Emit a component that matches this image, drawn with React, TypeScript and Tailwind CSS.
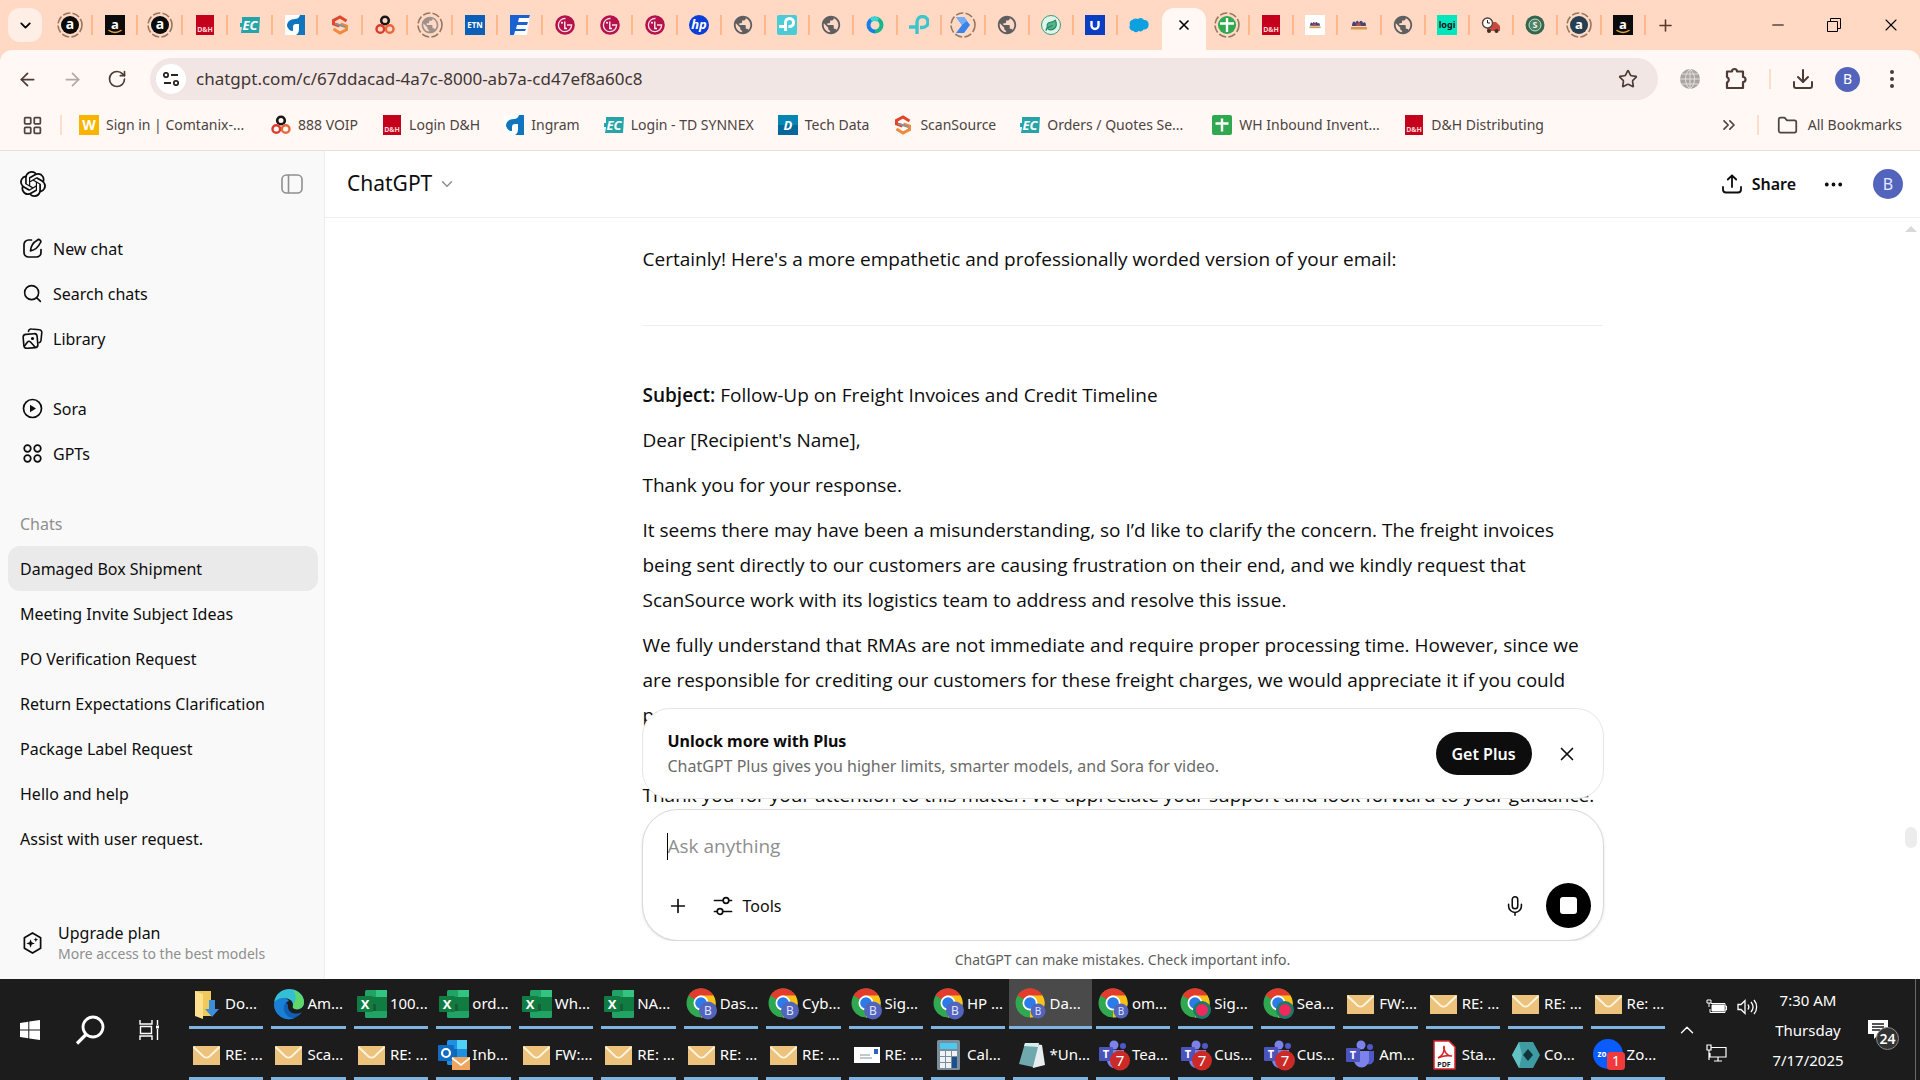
import {
  ArrowLeft,
  ArrowRight,
  ChevronDown,
  ChevronsRight,
  ChevronUp,
  Download,
  Ellipsis,
  EllipsisVertical,
  Folder,
  LayoutGrid,
  Leaf,
  Mic,
  Minus,
  Plus,
  RotateCw,
  Search,
  Star,
  X,
} from "lucide-react";
import type { ReactNode } from "react";
import { MdPublic } from "react-icons/md";
import { SiOpenai } from "react-icons/si";

type IconKind =
  | "amazon"
  | "amazonRing"
  | "amazonSlate"
  | "dh"
  | "ec"
  | "ingram"
  | "scan"
  | "voip"
  | "globe"
  | "globeRing"
  | "etn"
  | "eblue"
  | "lg"
  | "hp"
  | "tplink"
  | "tplinkPlain"
  | "webex"
  | "chevronRing"
  | "leaf"
  | "unifi"
  | "cloud"
  | "sheetsRing"
  | "sheets"
  | "people"
  | "peopleWhite"
  | "logi"
  | "truck"
  | "coin"
  | "comtanix"
  | "techdata"
  | "close";

function SvgIcon({ children }: { children: ReactNode }) {
  return (
    <svg viewBox="0 0 20 20" className="size-5 shrink-0" aria-hidden="true">
      {children}
    </svg>
  );
}

function Ring({ children }: { children: ReactNode }) {
  return (
    <svg
      viewBox="0 0 26 26"
      className="size-[26px] shrink-0"
      aria-hidden="true"
    >
      <circle
        cx="13"
        cy="13"
        r="12"
        fill="none"
        stroke="#95785f"
        strokeWidth="1.6"
        strokeDasharray="7.5 2.3"
      />
      <g transform="translate(3 3)">{children}</g>
    </svg>
  );
}

interface GlyphProps {
  x?: number;
  y: number;
  size: number;
  fill?: string;
  italic?: boolean;
  children: string;
}

function Glyph({
  x = 10,
  y,
  size,
  fill = "#fff",
  italic = false,
  children,
}: GlyphProps) {
  return (
    <text
      x={x}
      y={y}
      fontSize={size}
      fill={fill}
      fontWeight="700"
      fontStyle={italic ? "italic" : "normal"}
      textAnchor="middle"
    >
      {children}
    </text>
  );
}

const tplinkPath = "M2 11.5h6.5V16M8.5 11.5v-4a4 4 0 1 1 4 4h-1";

const peopleArt = (
  <>
    <path
      d="M3 11c0-4 2-6 3.5-3 1-3 2.5-3 3.500 0 1-3 3-3 4 0 2-2 3 0 3 3Z"
      fill="#47427a"
    />
    <path d="M7 11c0-3 1-4 2-2 1-3 3-1 3 2Z" fill="#a8504d" />
    <path d="M2 12h16v2.5H2Z" fill="#d69a4d" />
  </>
);

function SiteIcon({ kind }: { kind: IconKind }) {
  switch (kind) {
    case "amazon":
      return (
        <SvgIcon>
          <rect width="20" height="20" fill="#0b0b0b" />
          <Glyph y={14} size={13}>
            a
          </Glyph>
          <path
            d="M4 15.5c3.500 2.500 8.500 2.500 12 0"
            stroke="#f0a33c"
            strokeWidth="1.5"
            fill="none"
            strokeLinecap="round"
          />
        </SvgIcon>
      );
    case "amazonRing":
      return (
        <Ring>
          <circle cx="10" cy="10" r="9" fill="#0b0b0b" />
          <Glyph y={14} size={14}>
            a
          </Glyph>
        </Ring>
      );
    case "amazonSlate":
      return (
        <Ring>
          <circle cx="10" cy="10" r="9" fill="#263e50" />
          <Glyph y={14} size={13}>
            a
          </Glyph>
        </Ring>
      );
    case "dh":
      return (
        <SvgIcon>
          <rect x="1" width="18" height="20" fill="#c4001d" />
          <Glyph y={17} size={7} fill="#ffd5d5">
            D&amp;H
          </Glyph>
        </SvgIcon>
      );
    case "ec":
      return (
        <SvgIcon>
          <path d="M2 2h18l-1 16H1l1-6H0V8h2Z" fill="#25a5a9" />
          <Glyph y={15} size={13} italic>
            EC
          </Glyph>
        </SvgIcon>
      );
    case "ingram":
      return (
        <SvgIcon>
          <rect width="20" height="20" fill="#fff" />
          <path
            d="M20 0v20h-9c2-1 3-3 3-6V9h-3c-2 0-3 1-3 3v4c-3 0-5-2-6-5 0-4 3-7 8-7 2 0 4-1 5-4Z"
            fill="#0f75bc"
          />
        </SvgIcon>
      );
    case "scan":
      return (
        <SvgIcon>
          <path
            d="M16.5 6 10 2 3.500 5.500V9l6 2"
            stroke="#e2452c"
            strokeWidth="3"
            fill="none"
          />
          <path
            d="m3.500 14 6.500 4 6.500-3.500V11l-6-2"
            stroke="#f08a3c"
            strokeWidth="3"
            fill="none"
          />
          <path d="M5 8.500 15.500 12" stroke="#8d8f94" strokeWidth="2.2" />
        </SvgIcon>
      );
    case "voip":
      return (
        <SvgIcon>
          <circle cx="10" cy="5.500" r="3.8" stroke="#191515" strokeWidth="2.6" fill="none" />
          <circle cx="5.300" cy="14" r="3.8" stroke="#dd3a2c" strokeWidth="2.4" fill="none" />
          <circle cx="14.700" cy="14" r="3.8" stroke="#e8663a" strokeWidth="2.4" fill="none" />
        </SvgIcon>
      );
    case "globe":
      return <MdPublic size={22} color="#5f5f61" aria-hidden="true" />;
    case "globeRing":
      return (
        <Ring>
          <MdPublic size={20} color="#9d9189" />
        </Ring>
      );
    case "etn":
      return (
        <SvgIcon>
          <rect width="20" height="20" fill="#0b5fb8" />
          <Glyph y={13} size={8}>
            ETN
          </Glyph>
        </SvgIcon>
      );
    case "eblue":
      return (
        <SvgIcon>
          <path d="M0 0h20l-3 20H0Z" fill="#fff" />
          <path d="M0 0h20l-1 3H9L8 7h10l-1 3H7l-1 4h10l-1 2H5l-1 4H0Z" fill="#1a62d2" />
        </SvgIcon>
      );
    case "lg":
      return (
        <SvgIcon>
          <circle cx="10" cy="10" r="9.8" fill="#b5124c" />
          <path
            d="M10.500 3.500A6.600 6.600 0 1 0 16.600 10H12"
            stroke="#f7dde6"
            strokeWidth="1.3"
            fill="none"
          />
          <path d="M9.800 6.500v7H12" stroke="#fff" strokeWidth="1.3" fill="none" />
          <circle cx="7" cy="7.800" r="1" fill="#fff" />
        </SvgIcon>
      );
    case "hp":
      return (
        <SvgIcon>
          <circle cx="10" cy="10" r="10" fill="#0a3ed6" />
          <Glyph y={14} size={13} italic>
            hp
          </Glyph>
        </SvgIcon>
      );
    case "tplink":
      return (
        <SvgIcon>
          <rect width="20" height="20" rx="2" fill="#4acbd6" />
          <path d={tplinkPath} stroke="#fff" strokeWidth="3" fill="none" />
        </SvgIcon>
      );
    case "tplinkPlain":
      return (
        <SvgIcon>
          <path
            d="M0 12h8v7M8 12V7a5.500 5.500 0 1 1 5.500 5.500H11"
            stroke="#3cc5cd"
            strokeWidth="3.4"
            fill="none"
          />
        </SvgIcon>
      );
    case "webex":
      return (
        <SvgIcon>
          <path d="M10 3.500a6.500 6.500 0 0 1 0 13" stroke="#18b68c" strokeWidth="4" fill="none" />
          <path d="M10 16.500a6.500 6.500 0 0 1 0-13" stroke="#187fe8" strokeWidth="4" fill="none" />
          <path d="M6 5a6.500 6.500 0 0 1 7 0" stroke="#34d8d0" strokeWidth="4" fill="none" />
        </SvgIcon>
      );
    case "chevronRing":
      return (
        <Ring>
          <path d="M3 2h8l6 8-6 8H3l6-8Z" fill="#3a83ea" />
          <path d="M3 2h8l3 4-5 4Z" fill="#75aef8" />
        </Ring>
      );
    case "leaf":
      return (
        <span className="flex size-5 items-center justify-center rounded-full border border-[#3c9b76] bg-[#dff5ea]">
          <Leaf size={13} color="#1d8a60" fill="#59b08b" aria-hidden="true" />
        </span>
      );
    case "unifi":
      return (
        <SvgIcon>
          <rect width="20" height="20" fill="#0a3fc4" />
          <path
            d="M6.500 6v4.500a3.500 3.500 0 0 0 7 0V6"
            stroke="#fff"
            strokeWidth="2.4"
            fill="none"
          />
        </SvgIcon>
      );
    case "cloud":
      return (
        <SvgIcon>
          <path
            d="M4.500 16A4 4 0 0 1 1 10 4 4 0 0 1 4 4.500a4.500 4.500 0 0 1 5-.5 4.500 4.500 0 0 1 6 1 4.200 4.200 0 0 1 4.500 5 4.200 4.200 0 0 1-5 4.500 4 4 0 0 1-5 1.500 3 3 0 0 1-5 0Z"
            fill="#0ba0e0"
          />
        </SvgIcon>
      );
    case "sheetsRing":
      return (
        <Ring>
          <circle cx="10" cy="10" r="9" fill="#2fa84f" />
          <path d="M10 3v14M3 8.500h14" stroke="#fff" strokeWidth="2.4" />
        </Ring>
      );
    case "sheets":
      return (
        <SvgIcon>
          <rect width="20" height="20" rx="2" fill="#2fa84f" />
          <path d="M10 3.500v13M3.500 8.500h13" stroke="#fff" strokeWidth="2.4" />
        </SvgIcon>
      );
    case "people":
      return <SvgIcon>{peopleArt}</SvgIcon>;
    case "peopleWhite":
      return (
        <SvgIcon>
          <rect width="20" height="20" fill="#fff" />
          <g transform="translate(3 3) scale(.7)">{peopleArt}</g>
        </SvgIcon>
      );
    case "logi":
      return (
        <SvgIcon>
          <rect width="20" height="20" fill="#00e6bd" />
          <Glyph y={13} size={9} fill="#111">
            logi
          </Glyph>
        </SvgIcon>
      );
    case "truck":
      return (
        <SvgIcon>
          <path d="M9 7h6l4 4v5H6V9Z" fill="#c84a3c" />
          <circle cx="6.500" cy="8" r="5" fill="#fff" stroke="#55423c" strokeWidth="1.4" />
          <path d="M6.500 5v3H9" stroke="#222" fill="none" />
          <circle cx="8" cy="16" r="2" fill="#3b3230" />
          <circle cx="15.500" cy="16" r="2" fill="#3b3230" />
        </SvgIcon>
      );
    case "coin":
      return (
        <SvgIcon>
          <circle cx="10" cy="10" r="9.5" fill="#33664c" />
          <circle cx="10" cy="10" r="6" fill="#4f8265" stroke="#c9dccf" />
          <Glyph y={13} size={9} fill="#eef5f0">
            S
          </Glyph>
        </SvgIcon>
      );
    case "comtanix":
      return (
        <SvgIcon>
          <rect width="20" height="20" fill="#f8b500" />
          <Glyph y={15} size={14}>
            W
          </Glyph>
        </SvgIcon>
      );
    case "techdata":
      return (
        <SvgIcon>
          <rect width="20" height="20" fill="#0786b4" />
          <path d="M0 10h20v10H0Z" fill="#06679a" />
          <Glyph y={15} size={13} italic>
            D
          </Glyph>
        </SvgIcon>
      );
    default:
      return <X size={16} strokeWidth={2.5} aria-hidden="true" />;
  }
}

const wideTabs: IconKind[] = [
  "amazonRing",
  "amazon",
  "amazonRing",
  "dh",
  "ec",
  "ingram",
  "scan",
  "voip",
  "globeRing",
  "etn",
  "eblue",
  "lg",
  "lg",
  "lg",
];

const narrowTabs: IconKind[] = [
  "hp",
  "globe",
  "tplink",
  "globe",
  "webex",
  "tplinkPlain",
  "chevronRing",
  "globe",
  "leaf",
  "unifi",
  "cloud",
  "close",
  "sheetsRing",
  "dh",
  "peopleWhite",
  "people",
  "globe",
  "logi",
  "truck",
  "coin",
  "amazonSlate",
  "amazon",
];

function TabStrip() {
  return (
    <div className="flex h-[50px] items-center bg-[#ffd9c4]">
      <button
        type="button"
        aria-label="Search tabs"
        className="ml-2 flex size-[34px] items-center justify-center rounded-xl bg-[#ffeee5]"
      >
        <ChevronDown size={17} strokeWidth={2.5} />
      </button>
      <div className="flex flex-1 items-center self-stretch pl-1.5">
        {wideTabs.map((kind, i) => (
          <button
            key={i}
            type="button"
            aria-label={`Tab ${i + 1}`}
            className="flex w-[45px] items-center"
          >
            <span className="flex flex-1 justify-center">
              <SiteIcon kind={kind} />
            </span>
            <span className="h-5 w-0.5 bg-[#ffb78c]" />
          </button>
        ))}
        {narrowTabs.map((kind, i) => {
          if (kind === "close") {
            return (
              <div
                key={i}
                className="mt-2 flex w-11 items-center justify-center self-stretch rounded-t-xl bg-[#fff8f5] pb-2"
              >
                <button type="button" aria-label="Close tab">
                  <SiteIcon kind={kind} />
                </button>
              </div>
            );
          }
          const divided = narrowTabs[i + 1] !== "close";
          return (
            <button
              key={i}
              type="button"
              aria-label={`Tab ${i + 15}`}
              className="flex w-11 items-center"
            >
              <span className="flex flex-1 justify-center">
                <SiteIcon kind={kind} />
              </span>
              <span className={`h-5 w-0.5 ${divided ? "bg-[#ffb78c]" : ""}`} />
            </button>
          );
        })}
        <button
          type="button"
          aria-label="New tab"
          className="ml-2.5 text-[#5a3a2a]"
        >
          <Plus size={19} />
        </button>
      </div>
      <div className="flex items-center text-black">
        <button type="button" aria-label="Minimize" className="flex w-14 justify-center">
          <Minus size={18} strokeWidth={1.5} />
        </button>
        <button type="button" aria-label="Restore" className="flex w-14 justify-center">
          <svg viewBox="0 0 14 14" className="size-3.5" fill="none" stroke="currentColor">
            <path d="M.5 3.500h10v10H.5ZM3.500 3V.5h10v10H11" />
          </svg>
        </button>
        <button type="button" aria-label="Close" className="flex w-[58px] justify-center">
          <X size={20} strokeWidth={1.3} />
        </button>
      </div>
    </div>
  );
}

function AddressBar() {
  return (
    <div className="flex h-[58px] items-center rounded-t-xl bg-[#fff8f5] pr-4 pl-[17px] text-[#4d3b35]">
      <button type="button" aria-label="Back" className="w-[45px]">
        <ArrowLeft size={21} />
      </button>
      <button type="button" aria-label="Forward" className="w-[45px] text-[#b3a8a4]">
        <ArrowRight size={21} />
      </button>
      <button type="button" aria-label="Reload" className="w-[43px]">
        <RotateCw size={20} />
      </button>
      <div className="flex h-[42px] flex-1 items-center rounded-full bg-[#f2e6e4] pr-5 pl-1.5">
        <button
          type="button"
          aria-label="Site information"
          className="flex size-[30px] items-center justify-center rounded-full bg-white text-[#2c2523]"
        >
          <svg viewBox="0 0 16 14" className="h-3.5 w-4" fill="none" stroke="currentColor" strokeWidth="1.8">
            <circle cx="3" cy="3" r="2.2" />
            <path d="M8 3h7M1 11h7" />
            <circle cx="13" cy="11" r="2.2" />
          </svg>
        </button>
        <input
          aria-label="Address"
          className="ml-2.5 flex-1 bg-transparent text-[17px] text-[#3f3532] outline-none"
          defaultValue="chatgpt.com/c/67ddacad-4a7c-8000-ab7a-cd47ef8a60c8"
        />
        <button type="button" aria-label="Bookmark this page">
          <Star size={20} />
        </button>
      </div>
      <div className="flex items-center pl-[22px]">
        <svg viewBox="0 0 20 20" className="size-5" fill="none" aria-hidden="true">
          <circle cx="10" cy="10" r="10" fill="#a9a5a3" />
          <path
            d="M10 0v20M0 10h20M2 5h16M2 15h16M10 0C4 5 4 15 10 20M10 0c6 5 6 15 0 20"
            stroke="#e6dfdc"
          />
        </svg>
        <button type="button" aria-label="Extensions" className="ml-[25px]">
          <svg
            viewBox="0 0 22 24"
            className="h-6 w-[22px]"
            fill="none"
            stroke="currentColor"
            strokeWidth="2.2"
            strokeLinejoin="round"
          >
            <path d="M2 4.500h5a2.500 2.500 0 0 1 5 0h6v5.500a2.500 2.500 0 0 1 0 5V21H2v-5.500a3 3 0 0 0 0-5.500Z" />
          </svg>
        </button>
        <span className="ml-[22px] h-5 w-0.5 bg-[#ffdccb]" />
        <button type="button" aria-label="Downloads" className="ml-5">
          <Download size={24} />
        </button>
        <button
          type="button"
          aria-label="Profile"
          className="ml-5 flex size-[25px] items-center justify-center rounded-full bg-[#5364bd] text-sm text-white"
        >
          B
        </button>
        <button type="button" aria-label="Chrome menu" className="ml-5">
          <EllipsisVertical size={24} />
        </button>
      </div>
    </div>
  );
}

const bookmarks: { label: string; kind: IconKind; cut?: boolean }[] = [
  { label: "Sign in | Comtanix-...", kind: "comtanix", cut: true },
  { label: "888 VOIP", kind: "voip" },
  { label: "Login D&H", kind: "dh" },
  { label: "Ingram", kind: "ingram" },
  { label: "Login - TD SYNNEX", kind: "ec" },
  { label: "Tech Data", kind: "techdata" },
  { label: "ScanSource", kind: "scan" },
  { label: "Orders / Quotes Se...", kind: "ec", cut: true },
  { label: "WH Inbound Invent...", kind: "sheets", cut: true },
  { label: "D&H Distributing", kind: "dh" },
];

function BookmarksBar() {
  return (
    <div className="flex h-[43px] items-center border-b border-[#eadfdb] bg-[#fff8f5] pr-[18px] pb-2 pl-[22px] text-sm text-[#4d4340]">
      <LayoutGrid size={21} aria-hidden="true" />
      <span className="mx-[17px] h-5 w-0.5 bg-[#ffdccb]" />
      <nav className="flex flex-1 items-center gap-6 whitespace-nowrap">
        {bookmarks.map(({ label, kind, cut }) => (
          <a key={label} href="#" className="flex items-center gap-[7px]">
            <SiteIcon kind={kind} />
            <span className={cut ? "w-[141px]" : ""}>{label}</span>
          </a>
        ))}
      </nav>
      <button type="button" aria-label="More bookmarks">
        <ChevronsRight size={20} />
      </button>
      <span className="mx-[18px] h-5 w-0.5 bg-[#ffdccb]" />
      <a href="#" className="flex items-center gap-2.5">
        <Folder size={21} aria-hidden="true" />
        All Bookmarks
      </a>
    </div>
  );
}

function NavItem({ icon, label }: { icon: ReactNode; label: string }) {
  return (
    <a href="#" className="flex h-[45px] items-center gap-2.5 px-[22px]">
      {icon}
      {label}
    </a>
  );
}

const chats = [
  "Damaged Box Shipment",
  "Meeting Invite Subject Ideas",
  "PO Verification Request",
  "Return Expectations Clarification",
  "Package Label Request",
  "Hello and help",
  "Assist with user request.",
];

function Sidebar() {
  return (
    <aside className="flex w-[325px] shrink-0 flex-col border-r border-[#ededed] bg-[#f9f9f9] text-base text-[#0d0d0d]">
      <div className="flex h-[66px] items-center justify-between px-5">
        <SiOpenai size={26} aria-label="ChatGPT" />
        <button type="button" aria-label="Close sidebar" className="text-[#8f8f8f]">
          <svg viewBox="0 0 24 22" className="h-[22px] w-6" fill="none" stroke="currentColor" strokeWidth="1.6">
            <rect x="2" y="2" width="20" height="18" rx="4.5" />
            <path d="M8.500 2v18" />
          </svg>
        </button>
      </div>
      <nav className="pt-[9px]">
        <NavItem
          label="New chat"
          icon={
            <svg
              viewBox="0 0 21 21"
              className="size-[21px]"
              fill="none"
              stroke="currentColor"
              strokeWidth="1.7"
              strokeLinecap="round"
              strokeLinejoin="round"
            >
              <path d="M9.500 2h-3A4.500 4.500 0 0 0 2 6.500v8A4.500 4.500 0 0 0 6.500 19h8a4.500 4.500 0 0 0 4.500-4.500v-3" />
              <path d="M15.200 2.300a1.900 1.900 0 0 1 3 2.700c-1.500 3.300-4 6.700-9.700 7.800.4-5.500 3.500-8.700 6.700-10.500Z" />
            </svg>
          }
        />
        <NavItem
          label="Search chats"
          icon={<Search size={21} strokeWidth={1.8} />}
        />
        <NavItem
          label="Library"
          icon={
            <svg
              viewBox="0 0 21 21"
              className="size-[21px]"
              fill="none"
              stroke="currentColor"
              strokeWidth="1.6"
              strokeLinecap="round"
              strokeLinejoin="round"
            >
              <path d="M6.500 3.500A2.500 2.500 0 0 1 9.500 1l8 .8a2.500 2.500 0 0 1 2.300 2.700l-.8 8a2.500 2.500 0 0 1-2 2.200" />
              <rect x="1.500" y="6" width="14" height="14" rx="3" transform="rotate(-5 8.500 13)" />
              <path d="m2.500 18 3-4c1-1 2-1 3 0l4.500 5" />
              <circle cx="10.500" cy="10.500" r=".8" fill="currentColor" />
            </svg>
          }
        />
      </nav>
      <nav className="pt-[25px]">
        <NavItem
          label="Sora"
          icon={
            <svg viewBox="0 0 21 21" className="size-[21px]" fill="none" stroke="currentColor" strokeWidth="1.7">
              <circle cx="10.500" cy="10.500" r="9" />
              <path d="M8 6.800v7.400l6-3.700Z" fill="currentColor" stroke="none" />
            </svg>
          }
        />
        <NavItem
          label="GPTs"
          icon={
            <svg viewBox="0 0 21 21" className="size-[21px]" fill="none" stroke="currentColor" strokeWidth="1.7">
              <circle cx="5.500" cy="5.500" r="3.3" />
              <circle cx="15.500" cy="5.500" r="3.3" />
              <circle cx="5.500" cy="15.500" r="3.3" />
              <circle cx="15.500" cy="15.500" r="3.3" />
            </svg>
          }
        />
      </nav>
      <h2 className="mt-[25px] flex h-[45px] items-center px-5 text-[#8f8f8f]">
        Chats
      </h2>
      <ul className="pr-1.5 pl-2">
        {chats.map((chat, i) => (
          <li key={chat}>
            <a
              href="#"
              className={`flex h-[45px] items-center rounded-xl px-3 ${i === 0 ? "bg-[#eaeaea]" : ""}`}
            >
              {chat}
            </a>
          </li>
        ))}
      </ul>
      <a href="#" className="mt-auto flex items-center gap-[15px] px-[22px] pb-[15px]">
        <svg
          viewBox="0 0 22 26"
          className="h-[26px] w-[21px]"
          fill="none"
          stroke="currentColor"
          strokeWidth="1.8"
          strokeLinejoin="round"
        >
          <path d="M11 2.500 19.500 7.500v11L11 23.500l-8.500-5v-11Z" />
          <path
            d="m9 9 1.200 3.300 3.300 1.200-3.300 1.200L9 18l-1.200-3.300-3.300-1.200 3.300-1.200ZM14.500 7l.7 1.800 1.800.7-1.800.7-.7 1.800-.7-1.800-1.800-.7 1.800-.7Z"
            fill="currentColor"
            stroke="none"
          />
        </svg>
        <span>
          <span className="block leading-[22px]">Upgrade plan</span>
          <span className="block text-sm leading-5 text-[#8f8f8f]">
            More access to the best models
          </span>
        </span>
      </a>
    </aside>
  );
}

function Conversation() {
  return (
    <article className="mx-auto w-full max-w-[960px] pt-6 font-['Open_Sans',sans-serif] text-[19px] leading-[35px] text-[#0d0d0d]">
      <p>
        Certainly! Here's a more empathetic and professionally worded version of
        your email:
      </p>
      <hr className="mt-12 mb-[52px] border-[#ededed]" />
      <div className="flex flex-col gap-2.5">
        <p>
          <strong className="font-semibold">Subject:</strong> Follow-Up on
          Freight Invoices and Credit Timeline
        </p>
        <p>Dear [Recipient's Name],</p>
        <p>Thank you for your response.</p>
        <p>
          It seems there may have been a misunderstanding, so I’d like to
          clarify the concern. The freight invoices
          <br />
          being sent directly to our customers are causing frustration on their
          end, and we kindly request that
          <br />
          ScanSource work with its logistics team to address and resolve this
          issue.
        </p>
        <p>
          We fully understand that RMAs are not immediate and require proper
          processing time. However, since we
          <br />
          are responsible for crediting our customers for these freight charges,
          we would appreciate it if you could
          <br />
          provide a timeline for when the necessary billing credits will be
          issued, as this will allow us to plan our
          <br />
          next steps.
        </p>
        <p>
          Thank you for your attention to this matter. We appreciate your
          support and look forward to your guidance.
        </p>
      </div>
    </article>
  );
}

function Composer() {
  return (
    <div className="absolute inset-x-0 bottom-0 mx-auto flex max-w-[962px] flex-col text-[#0d0d0d]">
      <section className="mb-2.5 flex h-[91px] items-center rounded-[28px] border border-[#e6e6e6] bg-white px-[25px]">
        <div className="flex-1">
          <h2 className="text-base leading-[25px] font-bold">
            Unlock more with Plus
          </h2>
          <p className="text-base leading-[25px] text-[#6b6b6b]">
            ChatGPT Plus gives you higher limits, smarter models, and Sora for
            video.
          </p>
        </div>
        <button
          type="button"
          className="h-[43px] w-24 rounded-full bg-[#0d0d0d] text-base font-semibold text-white"
        >
          Get Plus
        </button>
        <button type="button" aria-label="Dismiss" className="ml-6">
          <X size={22} strokeWidth={1.8} />
        </button>
      </section>
      <form className="flex h-[132px] flex-col justify-between rounded-[36px] border border-[#d9d9d9] bg-white pt-5 pr-3 pb-3 pl-6 shadow-sm">
        <div className="flex items-center">
          <span className="h-[27px] w-px bg-black" />
          <input
            aria-label="Message"
            placeholder="Ask anything"
            className="flex-1 bg-transparent font-['Open_Sans',sans-serif] text-[19px] leading-8 outline-none placeholder:text-[#8f8f8f]"
          />
        </div>
        <div className="flex h-[45px] items-center">
          <button type="button" aria-label="Add files">
            <Plus size={22} strokeWidth={1.8} />
          </button>
          <button type="button" className="ml-6 flex items-center gap-2.5 text-base">
            <svg
              viewBox="0 0 20 20"
              className="size-5"
              fill="none"
              stroke="currentColor"
              strokeWidth="1.7"
              strokeLinecap="round"
            >
              <circle cx="13" cy="4.500" r="2.8" />
              <path d="M1.500 4.500H10M16 4.500h2.500M10 15.500h8.500M1.500 15.500H4" />
              <circle cx="7" cy="15.500" r="2.8" />
            </svg>
            Tools
          </button>
          <button type="button" aria-label="Dictate" className="mr-5 ml-auto">
            <Mic size={22} strokeWidth={1.7} />
          </button>
          <button
            type="button"
            aria-label="Stop"
            className="flex size-[45px] items-center justify-center rounded-full bg-black"
          >
            <span className="size-[17px] rounded-[3px] bg-white" />
          </button>
        </div>
      </form>
      <p className="h-[38px] bg-white text-center text-sm leading-[38px] text-[#5d5d5d]">
        ChatGPT can make mistakes. Check important info.
      </p>
    </div>
  );
}

function ChatPane() {
  return (
    <main className="flex min-w-0 flex-1 flex-col bg-white">
      <header className="flex h-[67px] items-center border-b border-[#ededed] pr-[17px] pl-[22px] text-[#0d0d0d]">
        <button type="button" className="flex items-center gap-1.5 text-[21px]">
          ChatGPT
          <ChevronDown size={18} className="text-[#8f8f8f]" />
        </button>
        <button
          type="button"
          className="ml-auto flex items-center gap-2.5 text-base font-semibold"
        >
          <svg
            viewBox="0 0 20 20"
            className="size-5"
            fill="none"
            stroke="currentColor"
            strokeWidth="1.8"
            strokeLinecap="round"
            strokeLinejoin="round"
          >
            <path d="M10 13V1.500M5.800 5.500 10 1.300l4.200 4.200M1 13v2.500a3 3 0 0 0 3 3h12a3 3 0 0 0 3-3V13" />
          </svg>
          Share
        </button>
        <button type="button" aria-label="Conversation options" className="ml-[26px]">
          <Ellipsis size={23} />
        </button>
        <button
          type="button"
          aria-label="Account"
          className="ml-7 flex size-[30px] items-center justify-center rounded-full bg-[#5364bd] text-base text-[#e6e9ff]"
        >
          B
        </button>
      </header>
      <div className="relative flex-1 overflow-hidden">
        <Conversation />
        <div className="absolute inset-y-0 right-0 flex w-[18px] flex-col items-center pt-2">
          <svg viewBox="0 0 12 6" className="h-1.5 w-3 text-[#d9d9d9]" fill="currentColor" aria-hidden="true">
            <path d="M6 0l6 6H0Z" />
          </svg>
          <span className="mt-auto mb-[131px] h-[21px] w-3 rounded-full bg-[#ececec]" />
        </div>
        <Composer />
      </div>
    </main>
  );
}

type AppKind =
  | "folder"
  | "edge"
  | "excel"
  | "chrome"
  | "chromeSmall"
  | "chromeRed"
  | "mail"
  | "outlook"
  | "card"
  | "calc"
  | "notepad"
  | "teamsBadge"
  | "teams"
  | "pdf"
  | "cube"
  | "zoom";

const chromeArt = (
  <>
    <circle cx="15" cy="15" r="14.5" fill="#2fa84f" />
    <path d="M15 15 2.500 7.500A14.500 14.500 0 0 1 27.500 7.500Z" fill="#e33b2e" />
    <path d="M15 15 13 7.500h14.500A14.500 14.500 0 0 1 15 29.500Z" fill="#fbc116" />
    <circle cx="15" cy="15" r="7.5" fill="#fff" />
    <circle cx="15" cy="15" r="5.8" fill="#2d7be8" />
  </>
);

const appArt: Record<AppKind, ReactNode> = {
  folder: (
    <>
      <path d="M4 3h16v25H4Z" fill="#f0c95c" />
      <path d="M4 3l8 3v25l-8-3Z" fill="#ffe08d" />
      <path d="M18 12h6v9h4l-7 8-7-8h4Z" fill="#3c8edb" />
    </>
  ),
  edge: (
    <>
      <path d="M1 16a15 15 0 0 0 24 12c2-1 3-3 4-4-8 4-15 0-14-7-3-6-11-7-14-1Z" fill="#0f5fb5" />
      <path d="M1 16c2-7 11-9 15-3-4 1-6 5-5 9 1 4 5 9 11 8A15 15 0 0 1 1 16Z" fill="#1b7fd6" />
      <path d="M1 15C2 6 9 1 16 1c9 0 15 6 15 13 0 6-5 8-9 7-3-1-2-2-2-4 0-5-5-7-9-7-5 0-8 2-10 5Z" fill="#35bfd4" />
      <path d="M20 2c7 2 11 7 11 12 0 6-5 8-9 7-3-1-2-2-2-4 3-4 4-10 0-15Z" fill="#5fd76a" />
    </>
  ),
  excel: (
    <>
      <rect x="9" y="2" width="22" height="28" rx="1.5" fill="#21a366" />
      <path d="M9 9h22v7H9Z" fill="#107c41" />
      <path d="M9 16h22v7H9Z" fill="#185c37" />
      <path d="M20 2h11v7H20Z" fill="#33c481" />
      <path d="M20 16h11v7H20Z" fill="#107c41" />
      <rect x="1" y="8" width="16" height="16" rx="1" fill="#107c41" />
      <Glyph x={9} y={21} size={13}>
        X
      </Glyph>
    </>
  ),
  chrome: (
    <>
      {chromeArt}
      <circle cx="22" cy="22.5" r="9" fill="#5364bd" />
      <text x="22" y="27" fontSize="12" fill="#dfe3ff" textAnchor="middle">
        B
      </text>
    </>
  ),
  chromeSmall: (
    <>
      {chromeArt}
      <circle cx="23" cy="23" r="7.5" fill="#5364bd" />
      <text x="23" y="27" fontSize="10" fill="#dfe3ff" textAnchor="middle">
        B
      </text>
    </>
  ),
  chromeRed: (
    <>
      {chromeArt}
      <circle cx="22" cy="22" r="9" fill="#1c7a6b" />
      <circle cx="22" cy="22" r="6" fill="#ee2a5c" />
    </>
  ),
  mail: (
    <>
      <rect x="2" y="7" width="27" height="19" fill="#ecc27c" />
      <path
        d="m2.500 8 10 9.500c2 1.500 4 1.500 6 0L28.500 8"
        stroke="#fff5df"
        strokeWidth="1.8"
        fill="none"
      />
    </>
  ),
  outlook: (
    <>
      <rect x="9" y="1" width="20" height="25" rx="1.5" fill="#1f8fe0" />
      <path d="M19 1h10v9H19Z" fill="#50d0f5" />
      <path d="M9 10h10v9H9Z" fill="#0f67b8" />
      <rect y="6" width="16" height="16" rx="1" fill="#0f6cc4" />
      <circle cx="8" cy="14" r="4" stroke="#fff" strokeWidth="2.2" fill="none" />
      <rect x="14" y="18" width="18" height="13" fill="#eda55f" />
      <path d="m14 19 9 7 9-7" stroke="#fff" strokeWidth="1.6" fill="none" />
    </>
  ),
  card: (
    <>
      <rect x="3" y="8" width="26" height="16" fill="#fff" />
      <rect x="23" y="10" width="4" height="5" fill="#2f63b8" />
      <path d="M9 16h10M9 19h12" stroke="#7f93a6" />
    </>
  ),
  calc: (
    <>
      <rect x="4" y="1" width="23" height="30" rx="1.5" fill="#7a8d9b" />
      <rect x="7" y="4" width="17" height="6" fill="#4ec8ef" />
      <path
        d="M7 12h5v5H7ZM13 12h5v5h-5ZM19 12h5v5h-5ZM7 18h5v5H7ZM13 18h5v5h-5ZM7 24h5v5H7ZM13 24h5v5h-5Z"
        fill="#eef2f4"
      />
      <path d="M19 18h5v11h-5Z" fill="#1e4e8c" />
    </>
  ),
  notepad: (
    <>
      <path d="M12 4 27 6l3 20-12 3Z" fill="#e8eef0" />
      <path d="M10 4h14l-6 24-14-3Z" fill="#6fa9ae" />
      <path d="M10 4h14l-1 4-14-1Z" fill="#d8edee" />
    </>
  ),
  teamsBadge: (
    <>
      <circle cx="16" cy="6" r="4.5" fill="#7b83eb" />
      <circle cx="25" cy="7" r="3" fill="#5059c9" />
      <path d="M9 11h17v10a8 8 0 0 1-17 0Z" fill="#7b83eb" />
      <rect x="1" y="8" width="14" height="14" rx="1" fill="#4b53bc" />
      <Glyph x={8} y={19} size={11}>
        T
      </Glyph>
      <circle cx="22" cy="21.5" r="10" fill="#cc2a26" />
      <text x="22" y="27" fontSize="15" fill="#fff" textAnchor="middle">
        7
      </text>
    </>
  ),
  teams: (
    <>
      <circle cx="16" cy="6" r="4.5" fill="#7b83eb" />
      <circle cx="25" cy="8" r="3" fill="#5059c9" />
      <path d="M20 12h9v9a5 5 0 0 1-7 4Z" fill="#5059c9" />
      <path d="M9 12h15v9a7.500 7.500 0 0 1-15 0Z" fill="#7b83eb" />
      <rect x="1" y="9" width="14" height="14" rx="1" fill="#4b53bc" />
      <Glyph x={8} y={20} size={11}>
        T
      </Glyph>
    </>
  ),
  pdf: (
    <>
      <path d="M6 2h15l6 6v22H6Z" fill="#fff" stroke="#d5252b" strokeWidth="1.5" />
      <path
        d="M10 19c5-2 7-8 6-12-1 5 3 10 8 10-5-1-10 0-14 2Z"
        stroke="#d5252b"
        strokeWidth="1.6"
        fill="none"
      />
      <Glyph x={16} y={28} size={7} fill="#222">
        PDF
      </Glyph>
    </>
  ),
  cube: (
    <>
      <path d="M9 3h14l7 13-7 13H9L2 16Z" fill="#3f9ba2" />
      <path d="m2 16 7-13 3 13-3 13Z" fill="#63c1c4" />
      <path d="m18 10 5 6-5 6-5-6Z" fill="#10343a" />
    </>
  ),
  zoom: (
    <>
      <circle cx="15" cy="15" r="15" fill="#0b5cff" />
      <Glyph x={9} y={18} size={8}>
        zo
      </Glyph>
      <rect x="14" y="13" width="18" height="18" rx="3.5" fill="#f13a3a" />
      <text x="23" y="27" fontSize="14" fill="#fff" textAnchor="middle">
        1
      </text>
    </>
  ),
};

const topRow: [AppKind, string][] = [
  ["folder", "Do..."],
  ["edge", "Am..."],
  ["excel", "100..."],
  ["excel", "ord..."],
  ["excel", "Wh..."],
  ["excel", "NA..."],
  ["chrome", "Das..."],
  ["chrome", "Cyb..."],
  ["chrome", "Sig..."],
  ["chrome", "HP ..."],
  ["chromeSmall", "Da..."],
  ["chromeSmall", "om..."],
  ["chromeRed", "Sig..."],
  ["chromeRed", "Sea..."],
  ["mail", "FW:..."],
  ["mail", "RE: ..."],
  ["mail", "RE: ..."],
  ["mail", "Re: ..."],
];

const bottomRow: [AppKind, string][] = [
  ["mail", "RE: ..."],
  ["mail", "Sca..."],
  ["mail", "RE: ..."],
  ["outlook", "Inb..."],
  ["mail", "FW:..."],
  ["mail", "RE: ..."],
  ["mail", "RE: ..."],
  ["mail", "RE: ..."],
  ["card", "RE: ..."],
  ["calc", "Cal..."],
  ["notepad", "*Un..."],
  ["teamsBadge", "Tea..."],
  ["teamsBadge", "Cus..."],
  ["teamsBadge", "Cus..."],
  ["teams", "Am..."],
  ["pdf", "Sta..."],
  ["cube", "Co..."],
  ["zoom", "Zo..."],
];

interface TaskRowProps {
  items: [AppKind, string][];
  active?: number;
}

function TaskRow({ items, active }: TaskRowProps) {
  return (
    <div className="grid h-[50px] grid-cols-[repeat(18,minmax(0,1fr))]">
      {items.map(([kind, label], i) => (
        <button
          key={i}
          type="button"
          className={`flex flex-col ${i === active ? "bg-[#4a4a4a]" : ""}`}
        >
          <span className="flex w-full flex-1 items-center gap-0.5 pt-0.5 pl-1.5 whitespace-nowrap">
            <svg viewBox="0 0 32 32" className="size-8 shrink-0" aria-hidden="true">
              {appArt[kind]}
            </svg>
            {label}
          </span>
          <span className={`w-full ${i === active ? "" : "px-1"}`}>
            <span className="block h-[3px] bg-[#7eb4e2]" />
          </span>
        </button>
      ))}
    </div>
  );
}

function Taskbar() {
  return (
    <footer className="flex h-[101px] shrink-0 bg-[#1c1c1c] text-[15px] text-white">
      <div className="flex w-[185px] items-center pl-5">
        <button type="button" aria-label="Start">
          <svg viewBox="0 0 20 20" className="size-5" fill="currentColor">
            <path d="M0 3 8.300 1.800v7.700H0ZM9.300 1.600 20 0v9.500H9.300ZM0 10.500h8.300v7.700L0 17ZM9.300 10.500H20V20L9.300 18.400Z" />
          </svg>
        </button>
        <button type="button" aria-label="Search" className="ml-[35px]">
          <svg viewBox="0 0 30 30" className="size-[30px]" fill="none" stroke="currentColor" strokeWidth="2.8">
            <circle cx="18" cy="12" r="10" />
            <path d="M11 19.500 2 28.500" strokeWidth="3.2" />
          </svg>
        </button>
        <button type="button" aria-label="Task view" className="ml-[34px]">
          <svg viewBox="0 0 20 20" className="size-5" fill="none" stroke="currentColor" strokeWidth="1.4">
            <path d="M1 0v4h12V0M1 20v-4h12v4M1.500 6.500h11v7h-11ZM18.500 0v5M18.500 9v11" />
            <path d="M17 5.500h3v3h-3Z" fill="currentColor" stroke="none" />
          </svg>
        </button>
      </div>
      <div className="flex min-w-0 flex-1 flex-col justify-between">
        <TaskRow items={topRow} active={10} />
        <TaskRow items={bottomRow} />
      </div>
      <div className="flex w-[251px] items-center pl-[7px]">
        <button type="button" aria-label="Show hidden icons">
          <ChevronUp size={22} strokeWidth={1.5} />
        </button>
        <div className="ml-2 flex flex-col gap-7">
          <div className="flex items-center gap-2.5">
            <svg viewBox="0 0 21 16" className="h-4 w-[21px]" fill="none" stroke="currentColor">
              <path d="M5 4.500h14v9H4V10M19 7h1.500v4H19M1 1v3h4V1M2 0v2M4 0v2M3 4v4" />
              <path d="M6 6h12v6H6Z" fill="currentColor" />
            </svg>
            <svg viewBox="0 0 21 18" className="h-[18px] w-[21px]" fill="none" stroke="currentColor" strokeWidth="1.3">
              <path d="M1 6.500h3l4-4v13l-4-4H1ZM11 6.500c1 1.500 1 3.500 0 5M14 4c2.500 3 2.500 7 0 10M17 2c3.500 4 3.500 10 0 14" />
            </svg>
          </div>
          <svg viewBox="0 0 21 18" className="h-[18px] w-[21px]" fill="none" stroke="currentColor" strokeWidth="1.2">
            <path d="M5 3.500h15v9.500H4V9M12 13v4M8 17h8M1 1h4v5H1ZM3 6v10" />
          </svg>
        </div>
        <div className="ml-1.5 flex w-[88px] flex-col text-center leading-[30px]">
          <span>7:30 AM</span>
          <span>Thursday</span>
          <span>7/17/2025</span>
        </div>
        <button type="button" aria-label="Notifications" className="relative ml-4">
          <svg viewBox="0 0 20 21" className="h-[21px] w-5">
            <path d="M0 1h20v14h-9l-5 5v-5H0Z" fill="#fff" />
            <path d="M4 5h12M4 8h12M4 11h8" stroke="#1c1c1c" strokeWidth="1.3" />
          </svg>
          <span className="absolute top-2 left-2 flex size-[23px] items-center justify-center rounded-full border border-[#8a8a8a] bg-[#333] text-sm font-semibold">
            24
          </span>
        </button>
        <span className="mr-1 ml-auto w-px self-stretch bg-[#6a6a6a]" />
      </div>
    </footer>
  );
}

export default function App() {
  return (
    <div className="flex h-screen min-h-[900px] flex-col overflow-hidden bg-white font-['Noto_Sans',sans-serif]">
      <div className="shrink-0 bg-[#ffd9c4]">
        <TabStrip />
        <AddressBar />
        <BookmarksBar />
      </div>
      <div className="flex min-h-0 flex-1">
        <Sidebar />
        <ChatPane />
      </div>
      <Taskbar />
    </div>
  );
}
